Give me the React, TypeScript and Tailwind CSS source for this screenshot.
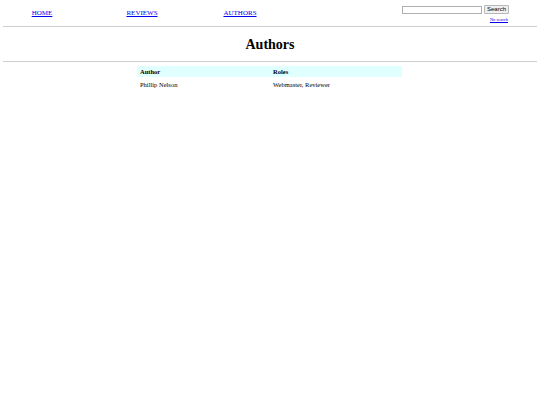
export default function App() {
  return (
    <div className="w-[540px] h-[405px] bg-white" style={{ fontFamily: '"Liberation Serif", serif' }}>
      <div className="flex h-[26px] items-start">
        <div className="w-[84px] flex justify-center pt-[9px]">
          <a href="#" className="text-[7px] leading-[9px] text-[#0000ee] underline">HOME</a>
        </div>
        <div className="w-[116px] flex justify-center pt-[9px]">
          <a href="#" className="text-[7px] leading-[9px] text-[#0000ee] underline">REVIEWS</a>
        </div>
        <div className="w-[80px] flex justify-center pt-[9px]">
          <a href="#" className="text-[7px] leading-[9px] text-[#0000ee] underline">AUTHORS</a>
        </div>
        <div className="ml-auto mr-[31px] pt-[5px] flex flex-col items-end">
          <div className="flex items-center gap-[2px]">
            <input type="text" className="w-[80px] h-[8px] border border-[#b0b0b0] bg-white" />
            <button className="h-[9px] px-[2px] border border-[#b8b8b8] bg-[#f0f0f0] rounded-[1px] text-[6px] leading-[7px] text-black" style={{ fontFamily: '"Liberation Sans", sans-serif' }}>Search</button>
          </div>
          <a href="#" className="mt-[3px] mr-[1px] text-[4.5px] leading-[5px] text-[#0000ee] underline">No search</a>
        </div>
      </div>
      <div className="mx-[3px] h-px bg-[#cfcfcf]" />
      <h1 className="text-center text-[14px] font-bold leading-[16px] text-black mt-[10px]">Authors</h1>
      <div className="mx-[3px] mt-[8px] h-px bg-[#cfcfcf]" />
      <div className="mt-[4px] ml-[137px] w-[265px]">
        <div className="flex bg-[#e0ffff] h-[11px] items-center text-[6.5px] font-bold text-black">
          <div className="w-[133px] pl-[3px]">Author</div>
          <div className="pl-[3px]">Roles</div>
        </div>
        <div className="flex h-[16px] items-center text-[6.5px] text-black">
          <div className="w-[133px] pl-[3px]">Phillip Nelson</div>
          <div className="pl-[3px]">Webmaster, Reviewer</div>
        </div>
      </div>
    </div>
  );
}
